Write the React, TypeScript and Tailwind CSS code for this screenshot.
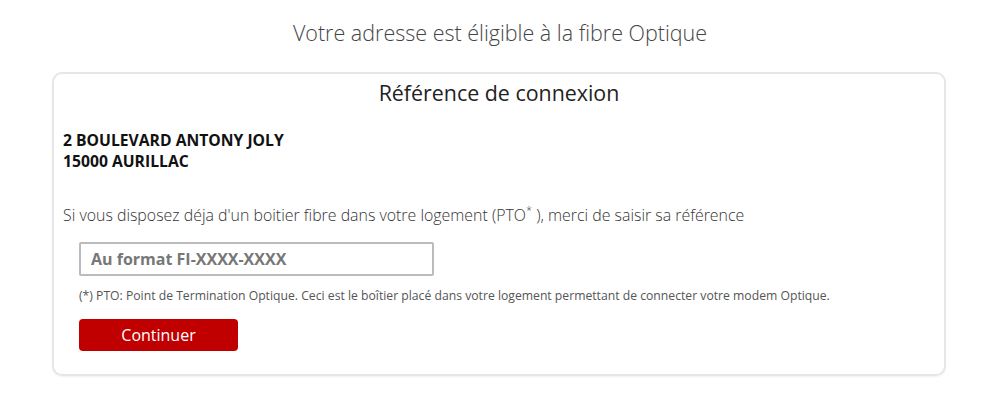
export default function App() {
  return (
    <div className="w-[1000px] h-[404px] bg-white" style={{ fontFamily: '"Open Sans", sans-serif' }}>
      <div className="pt-[16px] text-center text-[21.5px] leading-[34px] font-light text-[#444]">
        Votre adresse est éligible à la fibre Optique
      </div>
      <div className="mx-[52px] mt-[22px] w-[894px] h-[304px] border-2 border-[#e6e6e6] rounded-[10px] shadow-[0_1px_2px_rgba(0,0,0,0.06)] px-[9px]">
        <div className="text-center text-[21.4px] leading-[30px] text-[#222] pt-[4px]">Référence de connexion</div>
        <div className="mt-[22px] text-[15.7px] leading-[21px] font-bold text-[#111]">
          <div>2 BOULEVARD ANTONY JOLY</div>
          <div>15000 AURILLAC</div>
        </div>
        <div className="mt-[32px] text-[15.9px] leading-[22px] font-light text-[#333]">
          Si vous disposez déja d'un boitier fibre dans votre logement (PTO<sup className="text-[11px] top-[-7px]">*</sup> ), merci de saisir sa référence
        </div>
        <div className="mt-[16px] ml-[16px]">
          <input
            className="w-[355px] h-[34px] border-2 border-[#bbb] rounded-[2px] px-[10px] text-[16px] font-bold placeholder:text-[#777] outline-none"
            placeholder="Au format FI-XXXX-XXXX"
            style={{ fontFamily: '"Open Sans", sans-serif' }}
          />
        </div>
        <div className="mt-[11px] ml-[16px] text-[12.2px] leading-[18px] text-[#555]">
          (*) PTO: Point de Termination Optique. Ceci est le boîtier placé dans votre logement permettant de connecter votre modem Optique.
        </div>
        <div className="mt-[14px] ml-[16px]">
          <button className="w-[159px] h-[32px] bg-[#c00000] rounded-[4px] text-white text-[16px] leading-[32px]">Continuer</button>
        </div>
      </div>
    </div>
  );
}
